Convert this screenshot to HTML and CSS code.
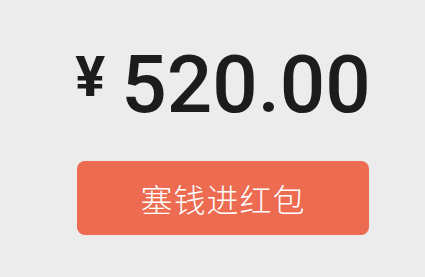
FILE: index.html
```html
<!DOCTYPE html>
<html lang="zh-CN">
<head>
    <meta charset="UTF-8">
    <meta name="viewport" content="width=device-width, initial-scale=1.0">
    <title>塞钱进红包</title>
    <link rel="stylesheet" href="styles.css">
</head>
<body>
    <div class="panel">
        <div class="amount">
            <span class="currency">¥</span>
            <span class="value">520.00</span>
        </div>
        <button type="button" class="submit">塞钱进红包</button>
    </div>
</body>
</html>
```

FILE: styles.css
```css
/* Page */
body {
    margin: 0;
    background: #ececec;
    font-family: Roboto, "Noto Sans CJK SC", sans-serif;
}

.panel {
    width: 292px;
    margin-left: 77px;
    padding-top: 45px;
    display: flex;
    flex-direction: column;
}

.amount {
    display: flex;
    align-items: flex-start;
    justify-content: center;
    gap: 16px;
    color: #1c1c1c;
    line-height: 1;
}

.currency {
    margin-top: 4px;
    font-size: 56px;
    font-weight: 700;
}

.value {
    font-size: 80px;
    font-weight: 500;
}

.submit {
    margin-top: 36px;
    height: 74px;
    border: none;
    border-radius: 8px;
    background: #ec6b51;
    color: #fff;
    font-family: "Noto Sans CJK SC", sans-serif;
    font-size: 32px;
    font-weight: 300;
    letter-spacing: 1px;
    cursor: pointer;
}
```
